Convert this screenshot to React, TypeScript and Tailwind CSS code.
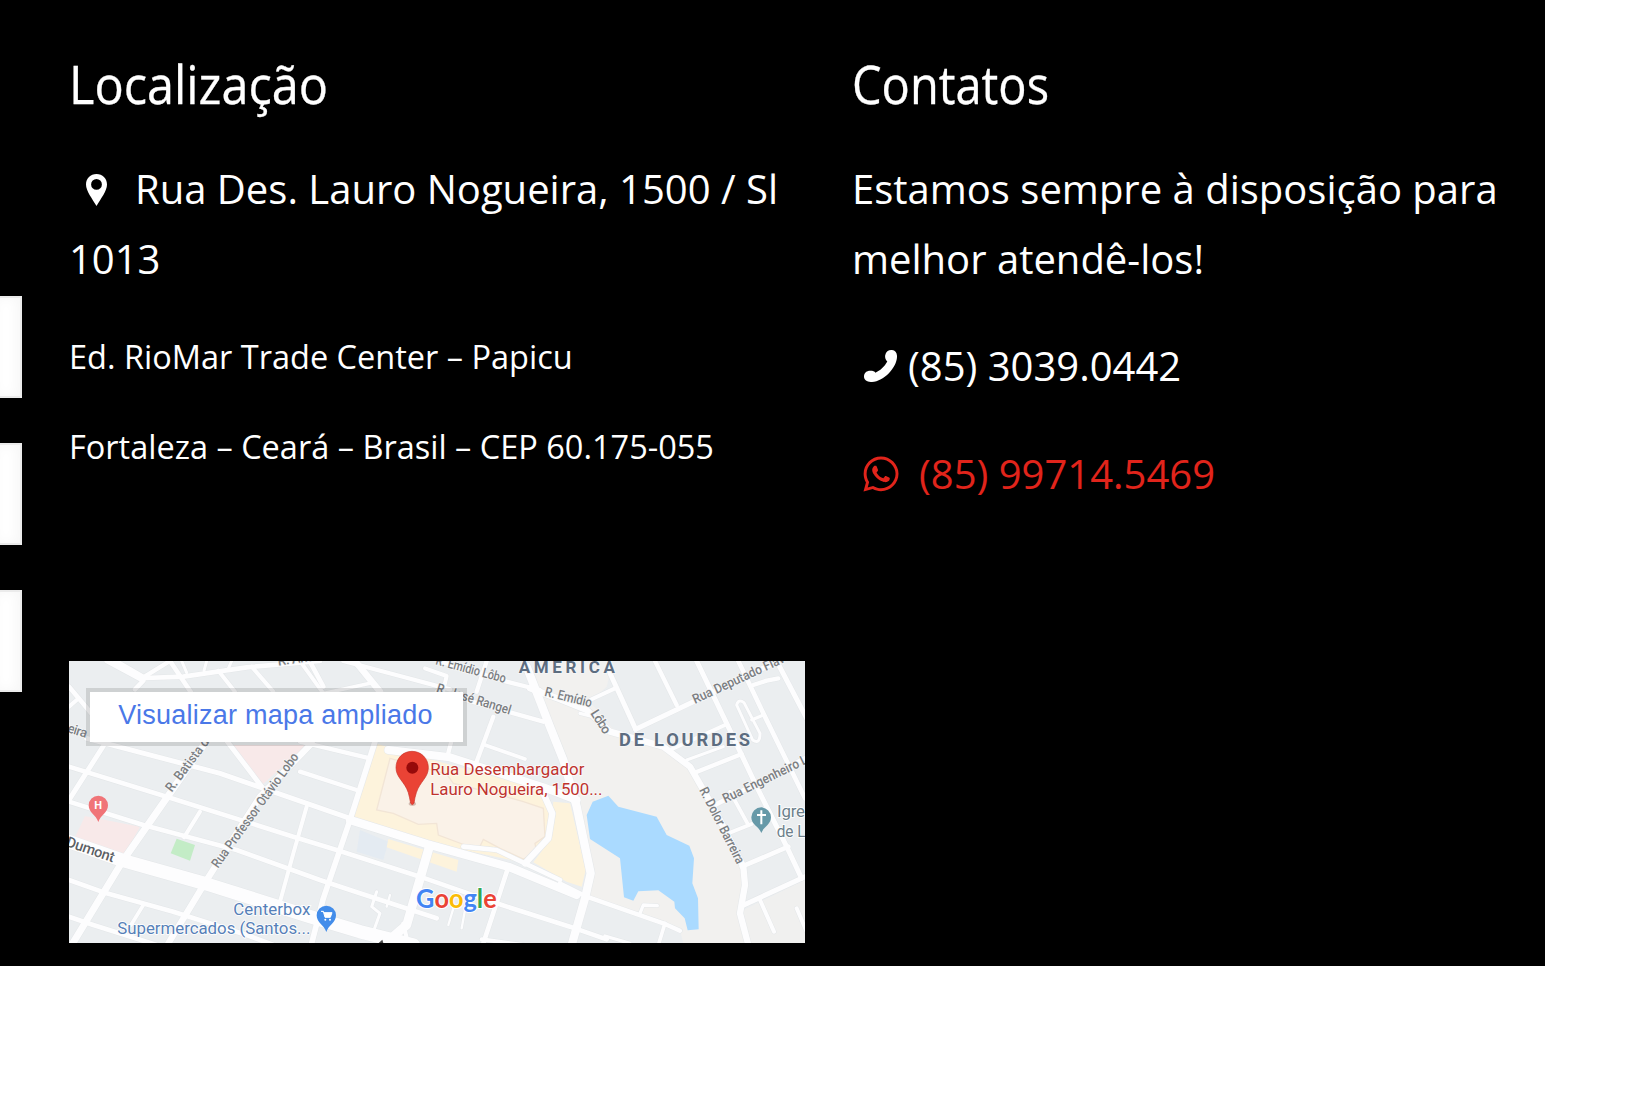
import { FaWhatsapp } from "react-icons/fa";

type Road = [string, number];

const roads: Road[] = [
  // north-west blocks
  ["M27 110L115 215", 14], ["M27 170L50 150", 12], ["M165 33L250 82", 16],
  ["M140 33L250 92L225 118", 14], ["M255 84L370 80L560 52L780 33", 14], ["M250 82L330 33", 13], ["M330 33L395 130", 14],
  ["M365 33L380 68", 9], ["M440 33L432 62", 9], ["M515 33L505 56", 9], ["M475 62L525 125", 12], ["M575 50L640 125", 12], ["M725 40L790 130", 12],
  ["M130 288L30 445", 15], ["M445 265L190 630L35 885", 21], ["M755 280L600 440L440 690L325 880", 19],
  ["M420 485L372 562", 12], ["M740 470L700 610L660 755", 12], ["M250 765L213 825", 11], ["M500 272L605 410", 15],
  ["M80 265L480 370L870 505", 15], ["M27 350L320 440L700 560L830 600L1080 680L1310 760L1530 830L1640 868", 14],
  ["M27 455L250 525L530 600L780 690L900 730L1130 805", 14],
  ["M27 575L190 632L440 702L750 800L900 845L1060 885", 40],
  ["M27 690L140 730L340 785L560 855L640 885", 14], ["M27 800L100 825L290 885", 14],
  // central blocks
  ["M750 35L790 110", 14], ["M885 33L960 125", 20], ["M850 33L1020 78L1170 118", 13], ["M770 135L930 100", 11],
  ["M1095 55L1160 78L1150 120", 12], ["M720 275L930 325", 13], ["M720 365L890 420", 13],
  ["M945 275L870 510L790 745L755 880", 17], ["M870 510L1100 582L1350 652L1550 735", 25],
  ["M1108 590L1040 825L970 885", 27], ["M1030 820L1045 885", 12], ["M1342 660L1270 880", 14],
  ["M1280 33L1250 125", 13], ["M1300 200L1248 340", 13], ["M1180 250L1162 320", 13], ["M1275 285L1395 327", 11],
  ["M1130 125L1450 215", 13], ["M1135 33L1340 95L1440 120", 13],
  ["M1400 50L1470 230L1510 330L1550 470L1592 670L1575 745L1535 885", 25],
  ["M985 300L1170 322L1450 412L1550 450", 24], ["M1450 430L1477 490L1465 565L1395 640", 19],
  ["M1210 590L1310 600L1500 690", 14], ["M950 725L935 770L960 790L940 845", 9], ["M990 735L980 770", 7], ["M1180 775L1165 825", 7], ["M1215 780L1205 835", 7],
  ["M1265 868L1390 885", 12],
  // eastern blocks
  ["M1410 115L1500 148L1580 180L1650 245L1810 290L1890 350L1970 490L2050 650L2055 705L2040 790L2065 885", 19],
  ["M1650 70L1727 238", 15], ["M1727 238L1900 155L2150 35", 15], ["M1785 33L1850 165", 13], ["M1590 150L1665 115", 12], ["M1560 190L1600 200", 10],
  ["M1910 33L2000 220L2090 410L2180 590L2225 685", 15], ["M2035 33L2110 190L2235 445", 14], ["M2150 33L2240 205", 15],
  ["M1830 300L1995 225", 11], ["M1880 330L1990 290", 9], ["M1900 370L2045 312", 13], ["M1965 465L2235 325", 14],
  ["M2000 552L2075 522", 12], ["M2010 425L2065 525", 11], ["M2045 650L2185 590", 14], ["M2045 768L2235 680", 15],
  ["M2100 750L2142 845", 12], ["M2210 775L2240 845", 12], ["M2080 105L2120 92L2155 85", 13], ["M2075 210L2110 195", 9],
  ["M2030 165Q2035 145 2052 158L2100 250Q2100 285 2078 270L2030 165", 9],
  ["M1500 700L1580 740L1810 820L1860 842", 13], ["M1740 790L1750 765L1792 767", 10], ["M1815 820L1795 885", 11], ["M1635 858L1710 880", 10],
];

const label = "[font-family:Roboto,'Liberation_Sans',sans-serif]";

function RoadMap() {
  return (
    <svg className="block h-full w-full" viewBox="27 33 2208 846" preserveAspectRatio="none">
      <rect x="27" y="33" width="2208" height="846" fill="#ebeef0" />
      <path d="M1430 33L1660 33L1640 110L1590 155L1670 250L1810 290L1890 350L1970 490L2050 650L2040 800L2065 880L1870 880L1860 840L1580 740L1590 670L1550 450L1460 220L1410 110Z" fill="#f2f1ef" />
      <path d="M2050 780L2235 690V880H2060Z" fill="#f0f0ef" />
      <path d="M520 285H740L600 410Z M75 498L240 530L195 612L45 562Z" fill="#f8e9e9" />
      <path d="M350 566L405 585L390 632L332 610Z" fill="#c3ecc6" />
      <path d="M900 540L985 575L970 630L890 605Z" fill="#e4ebf2" />
      <path d="M985 567L1195 630L1190 665L980 592Z M945 280L1100 325L1450 420L1480 540L1400 640L1210 600L870 505Z M1480 455L1530 460L1577 660L1565 710L1520 695L1420 637L1470 570Z" fill="#fdf3dc" />
      <path d="M990 325L1160 372L1180 400L1310 432L1390 455L1450 475L1455 560L1425 580L1430 610L1390 627L1320 595L1270 568L1255 600L1135 555L1130 520L1075 523L1000 490L950 480Z" fill="#faf2e8" stroke="#f2e5d6" strokeWidth="4" />
      <g fill="none" strokeLinejoin="round" strokeLinecap="round">
        {roads.map(([d, w], i) => <path key={"e" + i} d={d} stroke="#e4e7e9" strokeWidth={w + 3} />)}
        {roads.map(([d, w], i) => <path key={"r" + i} d={d} stroke="#fdfdfe" strokeWidth={w} />)}
      </g>
      <path d="M1580 495L1598 455L1645 437L1675 470L1790 500L1820 555L1888 587L1902 625L1897 700L1914 745L1916 838L1883 841L1874 805L1845 775L1843 755L1795 721L1735 724L1720 752L1692 742L1680 625L1590 567Z" fill="#aadaff" />

      <g className={label} fill="#7b7e82" stroke="#f5f6f7" strokeWidth="5" paintOrder="stroke" fontSize="40" fontWeight="500">
        <text transform="translate(655 47) rotate(-8)" textLength="110">R. Ana</text>
        <text transform="translate(20 246) rotate(17)" textLength="60">eira</text>
        <text transform="translate(335 428) rotate(-53)" textLength="210" lengthAdjust="spacingAndGlyphs">R. Batista de</text>
        <text transform="translate(474 656) rotate(-54)" textLength="414" lengthAdjust="spacingAndGlyphs">Rua Professor Otávio Lobo</text>
        <text transform="translate(1125 43) rotate(15)" textLength="216" lengthAdjust="spacingAndGlyphs">R. Emídio Lôbo</text>
        <text transform="translate(1127 126) rotate(17)" textLength="232" lengthAdjust="spacingAndGlyphs">R. José Rangel</text>
        <text transform="translate(1452 137) rotate(14)" textLength="145" lengthAdjust="spacingAndGlyphs">R. Emídio</text>
        <text transform="translate(1590 190) rotate(57)" textLength="78">Lôbo</text>
        <text transform="translate(1905 162) rotate(-25)" textLength="300" lengthAdjust="spacingAndGlyphs">Rua Deputado Flav</text>
        <text transform="translate(1996 460) rotate(-26)" textLength="278" lengthAdjust="spacingAndGlyphs">Rua Engenheiro L</text>
        <text transform="translate(1917 420) rotate(63)" textLength="252" lengthAdjust="spacingAndGlyphs">R. Dolor Barreira</text>
      </g>
      <text className={label} transform="translate(16 588) rotate(19)" fontSize="44" fontWeight="500" textLength="150" fill="#5c6065" stroke="#fff" strokeWidth="5" paintOrder="stroke">Dumont</text>
      <g className={label} fontWeight="700" fill="#5d6d80" stroke="#f5f6f7" strokeWidth="5" paintOrder="stroke">
        <text x="1376" y="70" fontSize="51" textLength="289">AMERICA</text>
        <text x="1677" y="289" fontSize="55" textLength="393">DE LOURDES</text>
      </g>
      <g className={label} fontSize="50.5" stroke="#fff" strokeWidth="5" paintOrder="stroke">
        <g fill="#bf332e" strokeOpacity=".7">
          <text x="1111" y="376" textLength="462">Rua Desembargador</text>
          <text x="1111" y="434" textLength="516">Lauro Nogueira, 1500...</text>
        </g>
        <g fill="#5680b8">
          <text x="520" y="796" textLength="231">Centerbox</text>
          <text x="172" y="853" textLength="579">Supermercados (Santos...</text>
        </g>
        <g fill="#6d7f8b">
          <text x="2151" y="502" textLength="84">Igre</text>
          <text x="2150" y="560" textLength="87" lengthAdjust="spacingAndGlyphs">de L</text>
        </g>
      </g>

      <ellipse cx="1057" cy="461" rx="11" ry="6" fill="#7c3a2e" opacity=".3" />
      <path d="M1056 304C1028 304 1008 326 1008 353C1008 383 1034 394 1045 428Q1049 443 1052 460Q1057 468 1062 460Q1064 443 1069 428C1080 394 1105 383 1105 353C1105 326 1084 304 1056 304Z" fill="#ea4335" stroke="#c9372c" strokeWidth="2" />
      <circle cx="1057" cy="353" r="18" fill="#960a0a" />

      <path d="M115 437a29 29 0 0 0-29 29c0 23 22 28 29 50c7-22 29-27 29-50a29 29 0 0 0-29-29Z" fill="#f07478" />
      <text className={label} x="103" y="478" fontSize="33" fontWeight="700" fill="#fff">H</text>
      <path d="M799 767a29 29 0 0 0-29 29c0 23 22 28 29 50c7-22 29-27 29-50a29 29 0 0 0-29-29Z" fill="#438dea" />
      <path d="M783 784h7l5 18h16l5-14h-24" fill="#fff" stroke="#fff" strokeWidth="3" />
      <circle cx="796" cy="809" r="3" fill="#fff" />
      <circle cx="810" cy="809" r="3" fill="#fff" />
      <path d="M2104 472a30 30 0 0 0-30 30c0 22 23 28 30 47c7-19 29-25 29-47a30 30 0 0 0-29-30Z" fill="#6699a8" />
      <path d="M2104 481v42M2091 495h27" stroke="#fff" strokeWidth="6" />

      <g className="[font-family:Lato,sans-serif]" fontSize="80" fontWeight="700" stroke="#fff" strokeWidth="6" paintOrder="stroke">
        <text x="1068" y="774" textLength="242" lengthAdjust="spacingAndGlyphs">
          <tspan fill="#4285f4">G</tspan><tspan fill="#ea4335">o</tspan><tspan fill="#fbbc05">o</tspan><tspan fill="#4285f4">g</tspan><tspan fill="#34a853">l</tspan><tspan fill="#ea4335">e</tspan>
        </text>
      </g>
      <path d="M956 879L967 869L970 879Z" fill="#444" />
    </svg>
  );
}

function Pin() {
  return (
    <svg className="ml-[17px] mr-[28px] inline-block h-8 w-[21px] align-[-2px]" viewBox="0 0 21 32">
      <path fill="#fff" fillRule="evenodd" d="M10.5 0C4.5 0 0 4.4 0 10.5C0 17 6.2 24.5 10.5 32C14.8 24.5 21 17 21 10.5C21 4.4 16.5 0 10.5 0ZM10.5 5a5.4 5.4 0 1 1 0 10.8a5.4 5.4 0 0 1 0-10.8Z" />
    </svg>
  );
}

function Phone() {
  return (
    <svg className="ml-3 mr-[11px] h-8 w-[33px] shrink-0" viewBox="0 0 33 32">
      <path fill="#fff" d="M21.2 5.2C21.8 1.5 24.8-.2 28 .1C31.4.5 33.2 3 33 7C32.6 17.5 20.2 31.2 8 32C3.3 32.2.3 30.2 0 27C-.2 23.4 2.3 20.8 6.2 20.8C8.9 20.8 10.7 21.4 11.4 22.7C16 21 20.5 16.7 23.3 11.6C21.7 10 20.8 7.7 21.2 5.2Z" />
    </svg>
  );
}

function Field() {
  return <div className="h-[102px] w-[22px] border-y-2 border-r-2 border-[#ebebeb] bg-white shadow-[inset_-4px_0_12px_rgba(0,0,0,0.035)]" />;
}

const title = "h-[60px] w-max origin-left whitespace-nowrap text-[53px] leading-[60px] [-webkit-text-stroke:0.3px_white]";

export default function App() {
  return (
    <div className="h-[1094px] w-[1641px] overflow-hidden bg-white">
      <footer className="flex h-[966px] w-[1545px] bg-black text-[40px] leading-[70px] text-white [font-family:'Open_Sans','Noto_Sans',sans-serif]">
        <div className="flex w-[69px] shrink-0 flex-col gap-[45px] pt-[296px]">
          <Field />
          <Field />
          <Field />
        </div>
        <section className="flex w-[736px] shrink-0 flex-col pt-[54px]">
          <h2 className={title + " scale-x-[0.918]"}>Localização</h2>
          <p className="mt-10 whitespace-nowrap">
            <Pin />Rua Des. Lauro Nogueira, 1500 / Sl<br />1013
          </p>
          <p className="mt-[34px] whitespace-nowrap text-[32.5px] leading-[57px]">Ed. RioMar Trade Center – Papicu</p>
          <p className="mt-[33px] whitespace-nowrap text-[32.5px] leading-[57px]">Fortaleza – Ceará – Brasil – CEP 60.175-055</p>
          <div className="relative mt-[186px] h-[282px] shrink-0 overflow-hidden">
            <RoadMap />
            <a className="absolute left-[17px] top-[27px] flex h-[58px] w-[381px] items-center justify-center border-4 border-black/12 bg-white bg-clip-padding pb-[3px] pr-0.5 text-[27px] leading-none tracking-[0.25px] text-[#4a78e8] [font-family:'Liberation_Sans',sans-serif]">
              Visualizar mapa ampliado
            </a>
          </div>
        </section>
        <section className="ml-[47px] flex flex-col pt-[54px]">
          <h2 className={title + " scale-x-[0.887]"}>Contatos</h2>
          <p className="mt-10 whitespace-nowrap">Estamos sempre à disposição para<br />melhor atendê-los!</p>
          <p className="mt-[37px] flex items-center whitespace-nowrap"><Phone />(85) 3039.0442</p>
          <p className="mt-[38px] flex items-center whitespace-nowrap text-[#e1241b]">
            <FaWhatsapp className="ml-[9px] mr-[18px] size-10" />(85) 99714.5469
          </p>
        </section>
      </footer>
    </div>
  );
}
